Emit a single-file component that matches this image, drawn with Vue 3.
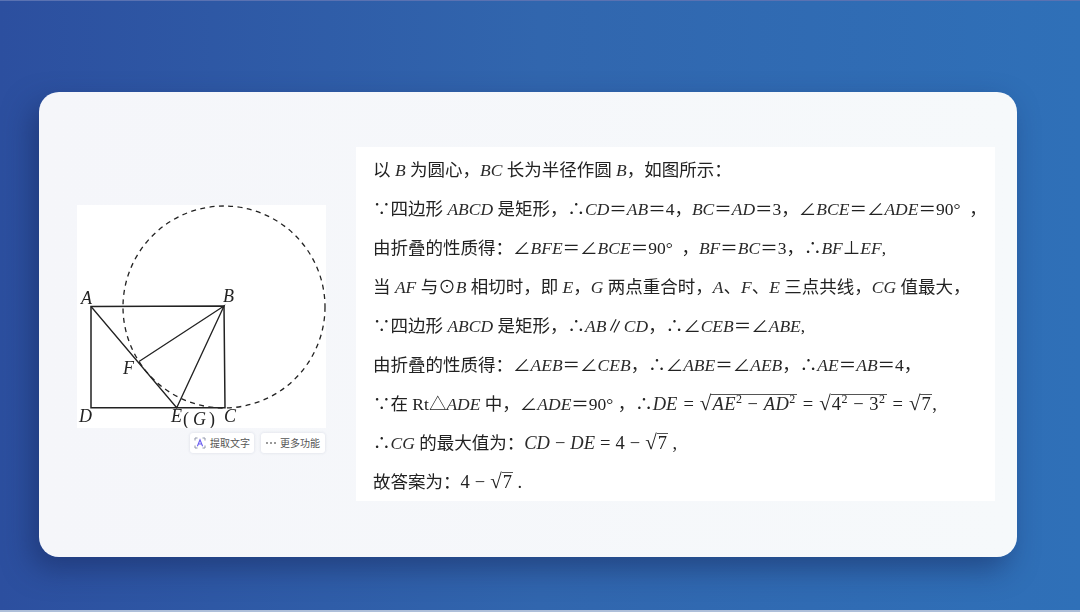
<script setup>
const dots = [0, 1, 2];
</script>

<template>
    <div class="page">
        <div class="card">
            <div class="figure-col">
                <div class="figure">
                    <svg width="249" height="223" viewBox="77 205 249 223">
                        <circle class="dash" cx="224" cy="307" r="101" />
                        <path class="line" d="M91 306.5 L224 306 L225 407.7 L91 407.7 Z" />
                        <path class="thin" d="M91 306.5 L176.7 407.7 L224 306 L139 361.5" />
                        <text x="81" y="304">A</text>
                        <text x="223" y="302">B</text>
                        <text x="123" y="374">F</text>
                        <text x="79" y="422">D</text>
                        <text x="171" y="422">E</text>
                        <text x="183" y="425" class="up">(</text>
                        <text x="193" y="425">G</text>
                        <text x="209" y="425" class="up">)</text>
                        <text x="224" y="422">C</text>
                    </svg>
                </div>
                <div class="tools">
                    <div class="tool">
                        <svg width="12" height="12" viewBox="0 0 12 12">
                            <path class="scan" d="M1 3.5V1H3.5M8.5 1H11V3.5M11 8.5V11H8.5M3.5 11H1V8.5" />
                            <path class="scan-a" d="M3.4 9.2L6 2.8L8.6 9.2M4.3 7H7.7" />
                        </svg>
                        <span>提取文字</span>
                    </div>
                    <div class="tool">
                        <span class="dots"><b v-for="d in dots" :key="d"></b></span>
                        <span>更多功能</span>
                    </div>
                </div>
            </div>

            <div class="answer">
                <p>以 <i>B</i> 为圆心，<i>BC</i> 长为半径作圆 <i>B</i>，如图所示：</p>
                <p>∵四边形 <i>ABCD</i> 是矩形，∴<i>CD</i>＝<i>AB</i>＝4，<i>BC</i>＝<i>AD</i>＝3，∠<i>BCE</i>＝∠<i>ADE</i>＝90°&nbsp;&nbsp;，</p>
                <p>由折叠的性质得：∠<i>BFE</i>＝∠<i>BCE</i>＝90°&nbsp;&nbsp;，<i>BF</i>＝<i>BC</i>＝3，∴<i>BF</i>⊥<i>EF</i>,</p>
                <p>当 <i>AF</i> 与⊙<i>B</i> 相切时，即 <i>E</i>，<i>G</i> 两点重合时，<i>A</i>、<i>F</i>、<i>E</i> 三点共线，<i>CG</i> 值最大，</p>
                <p>∵四边形 <i>ABCD</i> 是矩形，∴<i>AB</i>∥<i>CD</i>，∴∠<i>CEB</i>＝∠<i>ABE</i>,</p>
                <p>由折叠的性质得：∠<i>AEB</i>＝∠<i>CEB</i>，∴∠<i>ABE</i>＝∠<i>AEB</i>，∴<i>AE</i>＝<i>AB</i>＝4，</p>
                <p>∵在 Rt△<i>ADE</i> 中，∠<i>ADE</i>＝90°&nbsp;，∴<span class="formula wide"><i>DE</i><em>=</em><span class="rad">√</span><span class="root"><i>AE</i><sup>2</sup> − <i>AD</i><sup>2</sup></span><em>=</em><span class="rad">√</span><span class="root">4<sup>2</sup> − 3<sup>2</sup></span><em>=</em><span class="rad">√</span><span class="root">7</span>,</span></p>
                <p>∴<i>CG</i> 的最大值为：<span class="formula"><i>CD</i><em>−</em><i>DE</i><em>=</em>4<em>−</em><span class="rad">√</span><span class="root">7</span>&nbsp;,</span></p>
                <p>故答案为：<span class="formula">4<em>−</em><span class="rad">√</span><span class="root">7</span>&nbsp;.</span></p>
            </div>
        </div>
    </div>
</template>

<style>
html,
body {
    margin: 0;
    overflow: hidden;
}
</style>

<style scoped>
.page {
    box-sizing: border-box;
    width: 1080px;
    height: 612px;
    padding: 92px 63px 55px 39px;
    background: linear-gradient(90deg, #2c4f9f 0%, #3166ae 50%, #2f70b8 100%);
    border-top: 1px solid #5a72b2;
    border-bottom: 2px solid #aebfd9;
}

.card {
    box-sizing: border-box;
    height: 465px;
    margin-top: -1px;
    padding: 0 22px 0 38px;
    display: flex;
    align-items: center;
    gap: 30px;
    background: linear-gradient(90deg, #f5f6fa, #f6f9fb);
    border-radius: 20px;
    box-shadow: -8px 12px 28px rgba(22, 38, 90, 0.5);
}

.figure-col {
    width: 249px;
    margin-top: 8px;
    display: flex;
    flex-direction: column;
    gap: 5px;
}

.figure {
    height: 223px;
    background: #fff;
}

.figure svg {
    display: block;
    filter: blur(0.3px);
}

.figure text {
    font-family: "Liberation Serif", serif;
    font-style: italic;
    font-size: 18px;
    fill: #222;
}

.figure text.up {
    font-style: normal;
}

.dash {
    fill: none;
    stroke: #222;
    stroke-width: 1.3;
    stroke-dasharray: 5 4.4;
}

.line {
    fill: none;
    stroke: #222;
    stroke-width: 1.5;
}

.thin {
    fill: none;
    stroke: #222;
    stroke-width: 1.3;
}

.tools {
    display: flex;
    justify-content: flex-end;
    gap: 7px;
    padding-right: 1px;
}

.tool {
    width: 64px;
    height: 20px;
    display: flex;
    align-items: center;
    justify-content: center;
    gap: 4px;
    background: #fff;
    border-radius: 3px;
    box-shadow: 0 0 3px rgba(40, 60, 100, 0.14);
    font-family: "Noto Sans CJK SC", "Noto Sans", sans-serif;
    font-size: 10px;
    color: #555;
}

.scan {
    fill: none;
    stroke: #8d93a8;
    stroke-width: 1;
}

.scan-a {
    fill: none;
    stroke: #6a5df0;
    stroke-width: 1.1;
}

.dots {
    display: flex;
    gap: 2px;
}

.dots b {
    width: 2px;
    height: 2px;
    border-radius: 50%;
    background: #777;
}

.answer {
    width: 639px;
    height: 354px;
    box-sizing: border-box;
    margin-top: -1px;
    padding: 4px 0 0 17px;
    background: #fff;
    font-family: "Liberation Serif", "Noto Sans CJK SC", serif;
    font-size: 17.5px;
    color: #222;
}

.answer p {
    margin: 0;
    height: 39px;
    line-height: 39px;
    white-space: nowrap;
    filter: blur(0.25px);
}

.answer i {
    font-style: italic;
    color: #2a2a2a;
}

.answer sup {
    font-size: 12px;
    line-height: 0;
}

.formula {
    font-size: 18.5px;
}

.formula em {
    font-style: normal;
    margin: 0 5px;
}

.formula.wide em {
    margin: 0 6px;
}

.formula.wide .root {
    letter-spacing: 0.5px;
}

.rad {
    font-size: 21px;
    line-height: 0;
}

.root {
    display: inline-block;
    line-height: 19px;
    border-top: 1px solid #555;
    padding: 0 1px;
}
</style>
